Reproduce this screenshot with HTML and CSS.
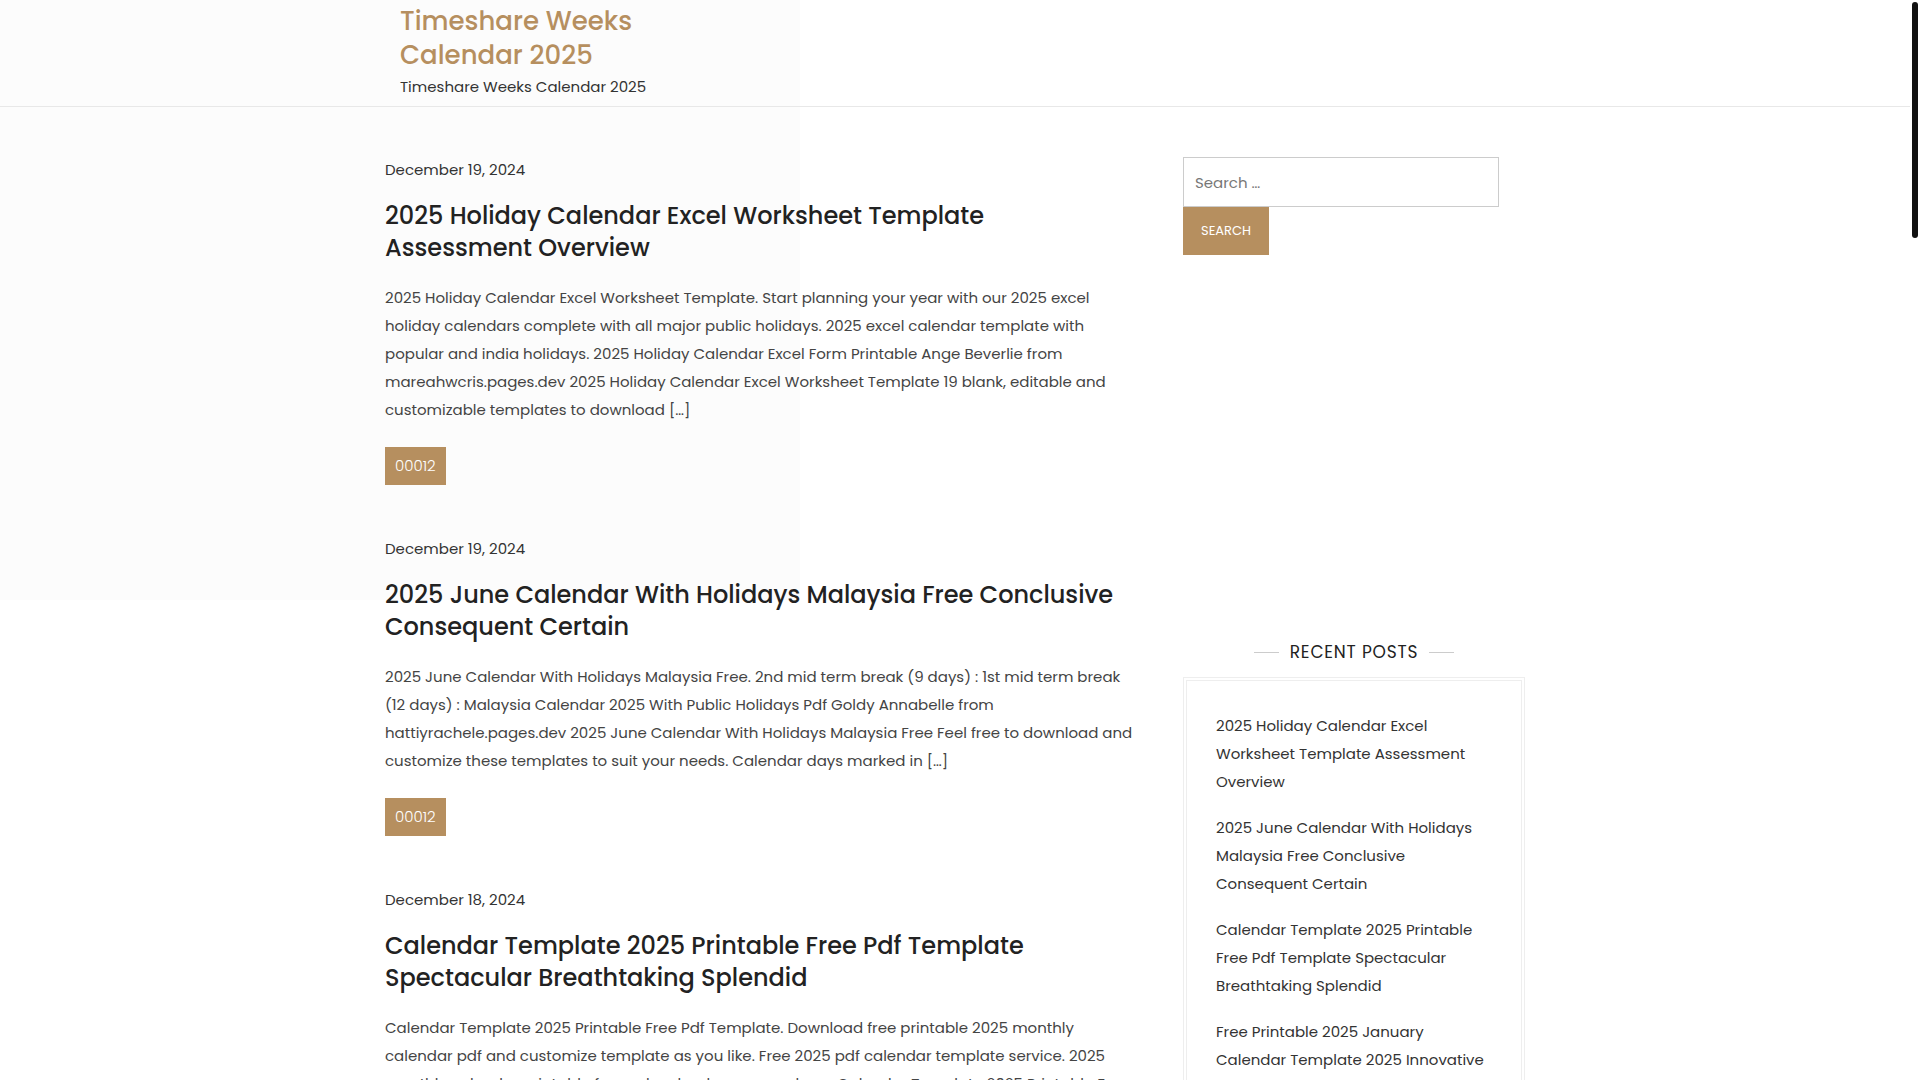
FILE: index.html
```html
<!DOCTYPE html>
<html lang="en">
<head>
<meta charset="utf-8">
<title>Timeshare Weeks Calendar 2025</title>
<link rel="stylesheet" href="styles.css">
</head>
<body>
<div class="bg-patch"></div>
<div class="page">
  <header class="site-header">
    <div class="container">
      <div class="branding">
        <p class="site-title"><a href="#">Timeshare Weeks Calendar 2025</a></p>
        <p class="site-desc">Timeshare Weeks Calendar 2025</p>
      </div>
    </div>
  </header>

  <div class="container content">
    <main class="posts">
      <article class="post">
        <div class="post-date">December 19, 2024</div>
        <h2 class="post-title"><a href="#">2025 Holiday Calendar Excel Worksheet Template Assessment Overview</a></h2>
        <p class="post-excerpt">2025 Holiday Calendar Excel Worksheet Template. Start planning your year with our 2025 excel holiday calendars complete with all major public holidays. 2025 excel calendar template with popular and india holidays. 2025 Holiday Calendar Excel Form Printable Ange Beverlie from mareahwcris.pages.dev 2025 Holiday Calendar Excel Worksheet Template 19 blank, editable and customizable templates to download […]</p>
        <div class="tags"><a class="tag" href="#">00012</a></div>
      </article>

      <article class="post">
        <div class="post-date">December 19, 2024</div>
        <h2 class="post-title"><a href="#">2025 June Calendar With Holidays Malaysia Free Conclusive Consequent Certain</a></h2>
        <p class="post-excerpt">2025 June Calendar With Holidays Malaysia Free. 2nd mid term break (9 days) : 1st mid term break (12 days) : Malaysia Calendar 2025 With Public Holidays Pdf Goldy Annabelle from hattiyrachele.pages.dev 2025 June Calendar With Holidays Malaysia Free Feel free to download and customize these templates to suit your needs. Calendar days marked in […]</p>
        <div class="tags"><a class="tag" href="#">00012</a></div>
      </article>

      <article class="post">
        <div class="post-date">December 18, 2024</div>
        <h2 class="post-title"><a href="#">Calendar Template 2025 Printable Free Pdf Template Spectacular Breathtaking Splendid</a></h2>
        <p class="post-excerpt">Calendar Template 2025 Printable Free Pdf Template. Download free printable 2025 monthly calendar pdf and customize template as you like. Free 2025 pdf calendar template service. 2025 monthly calendar printable for work, school or personal use. Calendar Template 2025 Printable Free Pdf Template with holidays and notes […]</p>
        <div class="tags"><a class="tag" href="#">00012</a></div>
      </article>
    </main>

    <aside class="sidebar">
      <form class="search-form">
        <input class="search-field" type="search" placeholder="Search …">
        <button class="search-submit" type="button">Search</button>
      </form>
      <div class="ad-space"></div>
      <section class="widget">
        <h3 class="widget-title"><span>Recent Posts</span></h3>
        <div class="widget-box">
          <ul class="recent-list">
            <li><a href="#">2025 Holiday Calendar Excel Worksheet Template Assessment Overview</a></li>
            <li><a href="#">2025 June Calendar With Holidays Malaysia Free Conclusive Consequent Certain</a></li>
            <li><a href="#">Calendar Template 2025 Printable Free Pdf Template Spectacular Breathtaking Splendid</a></li>
            <li><a href="#">Free Printable 2025 January Calendar Template 2025 Innovative Remarkable Superior</a></li>
            <li><a href="#">Printable 2025 Monthly Calendar With Holidays Uk Elegant Exquisite</a></li>
          </ul>
        </div>
      </section>
    </aside>
  </div>
</div>
<div class="scroll-thumb"></div>
</body>
</html>
```

FILE: styles.css
```css
html {
  scrollbar-width: none;
}
html::-webkit-scrollbar {
  display: none;
}
body {
  margin: 0;
  background: #ffffff;
  font-family: "Poppins", Inter, "Noto Sans", sans-serif;
  color: #444;
}
a {
  color: inherit;
  text-decoration: none;
}
.bg-patch {
  position: absolute;
  top: 0;
  left: 0;
  width: 800px;
  height: 600px;
  background: #fcfcfc;
  z-index: -1;
}
.page {
  width: 1910px;
}
.container {
  width: 1170px;
  margin: 0 auto;
  padding: 0 15px;
  box-sizing: border-box;
}

/* header */
.site-header {
  border-bottom: 1px solid #e8e8e8;
}
.branding {
  padding: 5px 15px 7px;
  width: 290px;
}
.site-title {
  margin: 0;
  font-size: 26px;
  line-height: 33.5px;
  font-weight: 500;
  color: #b68f5f;
}
.site-desc {
  margin: 3px 0 0;
  font-size: 15px;
  line-height: 24px;
  color: #333;
}

/* content */
.content {
  display: flex;
  gap: 48px;
  align-items: flex-start;
}
.posts {
  width: 750px;
  flex: none;
  padding-top: 51px;
}
.post {
  margin-bottom: 52px;
}
.post-date {
  font-size: 15px;
  line-height: 24px;
  color: #333;
}
.post-title {
  margin: 18px 0 0;
  font-size: 24px;
  line-height: 31.5px;
  font-weight: 500;
  color: #222;
}
.post-excerpt {
  margin: 21px 0 0;
  font-size: 15px;
  line-height: 28px;
  color: #444;
}
.tags {
  display: flex;
  margin-top: 23px;
}
.tag {
  display: block;
  height: 38px;
  line-height: 38px;
  padding: 0 10px;
  background: #b68f5f;
  color: #fff;
  font-size: 15px;
  font-weight: 300;
}

/* sidebar */
.sidebar {
  width: 342px;
  flex: none;
  padding-top: 50px;
}
.search-form {
  display: flex;
  flex-direction: column;
  align-items: flex-start;
}
.search-field {
  width: 316px;
  height: 50px;
  box-sizing: border-box;
  border: 1px solid #cccccc;
  padding: 0 11px;
  margin: 0;
  font-family: inherit;
  font-size: 15px;
  color: #777;
  background: #fff;
  outline: none;
}
.search-field::placeholder {
  color: #777;
}
.search-submit {
  width: 86px;
  height: 48px;
  border: 0;
  margin: 0;
  background: #b68f5f;
  color: #fff;
  font-family: inherit;
  font-size: 13px;
  font-weight: 400;
  text-transform: uppercase;
}
.ad-space {
  height: 384px;
}
.widget-title {
  display: flex;
  align-items: center;
  justify-content: center;
  gap: 11px;
  margin: 0 0 11px;
  font-size: 17px;
  line-height: 27px;
  font-weight: 400;
  letter-spacing: 0.8px;
  text-transform: uppercase;
  color: #222;
}
.widget-title::before,
.widget-title::after {
  content: "";
  width: 25px;
  height: 1px;
  background: #cccccc;
}
.widget-box {
  border: 1px solid #eeeeee;
  padding: 2px;
}
.recent-list {
  list-style: none;
  margin: 0;
  border: 1px solid #eeeeee;
  padding: 31px 28px 30px 29px;
  display: flex;
  flex-direction: column;
  gap: 18px;
}
.recent-list li {
  font-size: 15px;
  line-height: 28px;
  color: #333;
}

.scroll-thumb {
  position: fixed;
  top: 2px;
  right: 2px;
  width: 6px;
  height: 236px;
  border-radius: 3px;
  background: #111;
}
```
